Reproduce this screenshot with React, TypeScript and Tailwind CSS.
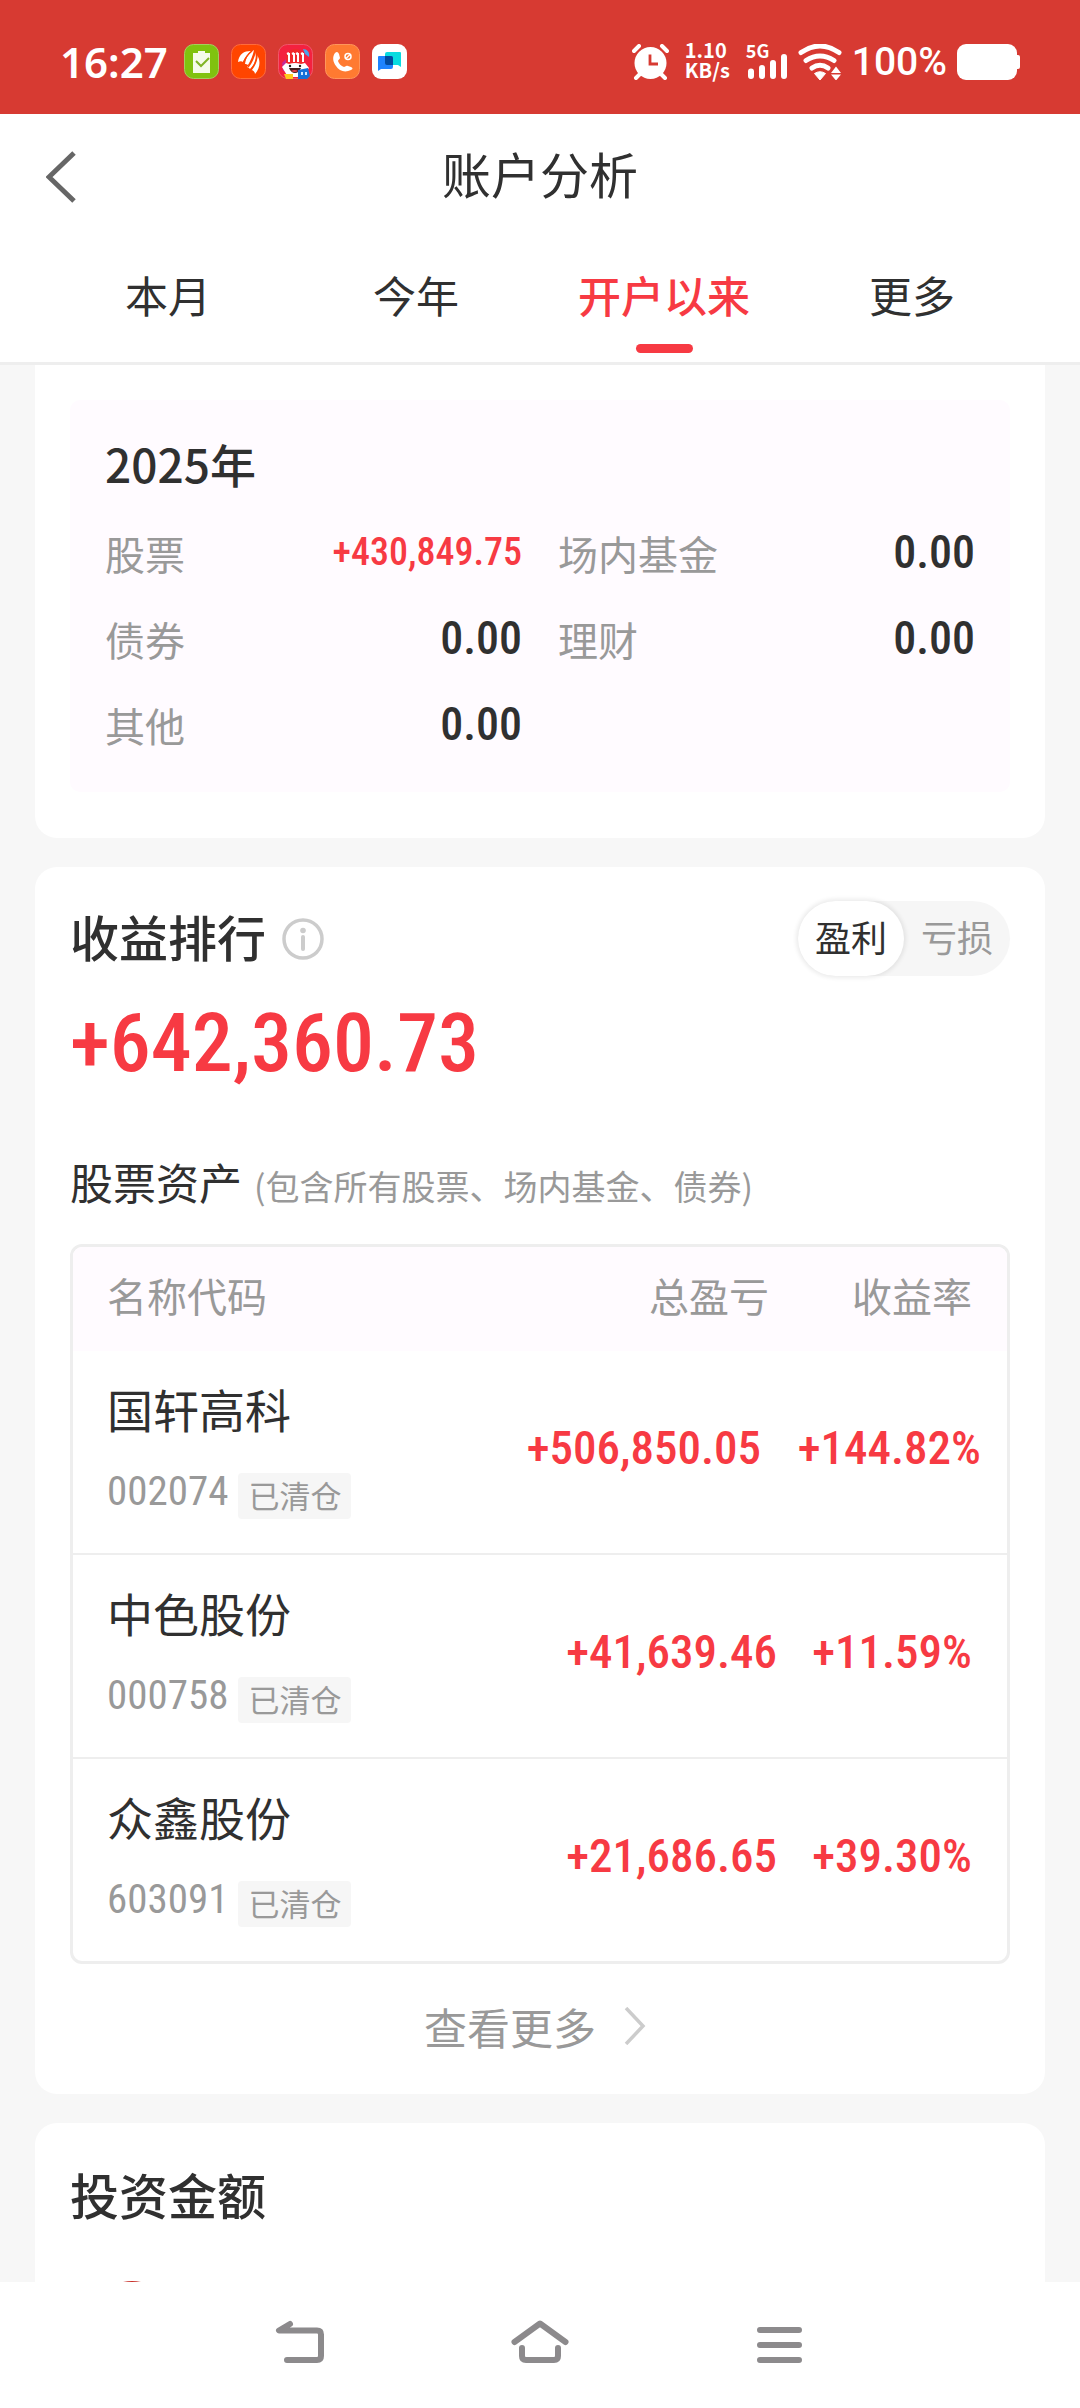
import { useState } from "react";

const tabs = ["本月", "今年", "开户以来", "更多"];

const yearItems = [
  { label: "股票", value: "+430,849.75", gain: true },
  { label: "场内基金", value: "0.00" },
  { label: "债券", value: "0.00" },
  { label: "理财", value: "0.00" },
  { label: "其他", value: "0.00" },
];

const stocks = [
  { name: "国轩高科", code: "002074", profit: "+506,850.05", rate: "+144.82%", wide: true },
  { name: "中色股份", code: "000758", profit: "+41,639.46", rate: "+11.59%" },
  { name: "众鑫股份", code: "603091", profit: "+21,686.65", rate: "+39.30%" },
];

function AppIcons() {
  return (
    <div className="flex gap-3">
      <svg className="size-[35px]" viewBox="0 0 35 35" aria-hidden="true">
        <rect x=".5" y=".5" width="34" height="34" rx="9" fill="#80c20f" stroke="#a3cf5c" />
        <path d="M9 9h5V7h7v2h5v20H9z" fill="#f5fbea" />
        <path d="M12 17l5 5 8-8" fill="none" stroke="#80b525" strokeWidth="2" />
      </svg>
      <svg className="size-[35px]" viewBox="0 0 35 35" aria-hidden="true">
        <rect x=".5" y=".5" width="34" height="34" rx="9" fill="#ff4500" stroke="#ff6b3a" />
        <path d="M7 18C8 10 13 7 20 7c-3 3-6 6-8 11-1-1-3-1-5 0z" fill="#fff" />
        <path d="M14 20C15 13 18 9 23 6c-1 5-3 10-6 15-1-1-2-1-3-1z" fill="#fff" />
        <path d="M19 25c-1-1-2-2-3-2 4-4 7-9 8-15 2 6 0 12-5 17z" fill="#fff" />
        <path d="M24 30c0-2-2-4-4-4 4-5 6-9 6-15 4 6 3 13-2 19z" fill="#fff" />
        <path d="M12 20C14 14 17 10 21 7M17 23c4-5 6-10 7-15M20 26c4-5 6-10 6-15" fill="none" stroke="#ff4500" strokeWidth="1.500" />
      </svg>
      <svg className="size-[35px]" viewBox="0 0 35 35" aria-hidden="true">
        <rect x=".5" y=".5" width="34" height="34" rx="9" fill="#f4213f" stroke="#f0566a" />
        <path d="M25 5c4 0 7 3 6 8l-4-3z" fill="#4aa3ea" />
        <path d="M4 19l4-4v12H5z" fill="#c42b96" />
        <path d="M8 20V10q10-10 18 0v10z" fill="#f12a2c" />
        <path d="M11 9v9M16 9v9M20 9v9M25 9v9M9 10l2-1M14 10l2-1M18 10l2-1M23 10l2-1" stroke="#fff" strokeWidth="2" />
        <path d="M4 23l4-4 3 1q6-2 12 0l4-1 4 5-7 9H10z" fill="#fff" />
        <circle cx="12" cy="22" r="1.200" fill="#222" />
        <circle cx="22" cy="22" r="1.200" fill="#222" />
        <path d="M11 24h12q-2 5-6 5t-6-5z" fill="#44201e" />
        <path d="M13 27q4-2 7 0-3 2-7 0z" fill="#ef3f4c" />
        <path d="M6 30h9v5H8z" fill="#ffc91f" />
        <path d="M20 26l10-2 2 8-3 3h-9z" fill="#1670d8" />
        <path d="M23 28h2v3h-2zM27 28h2v3h-2z" fill="#cfe6ff" />
      </svg>
      <svg className="size-[35px]" viewBox="0 0 35 35" aria-hidden="true">
        <rect x=".5" y=".5" width="34" height="34" rx="9" fill="#ff7a31" stroke="#ff965b" />
        <path d="M10 9c2-2 3-1 4 1l1 4c0 1-2 2-2 3 1 3 3 5 6 6 1 0 2-2 4-1l3 1c2 1 2 2 0 3-6 3-12 1-15-4-3-4-4-9-1-13z" fill="#fff" />
        <circle cx="23" cy="12.500" r="3" fill="none" stroke="#fff" strokeWidth="1.500" />
        <path d="M21 14.500l4-4" stroke="#fff" strokeWidth="1.200" />
      </svg>
      <svg className="size-[35px]" viewBox="0 0 35 35" aria-hidden="true">
        <rect width="35" height="35" rx="9" fill="#fff" />
        <path d="M15 8h13q1 0 1 1v14l-3-2H15q-2 0-2-2v-9q0-2 2-2z" fill="#08dbe0" />
        <path d="M7 12h12q2 0 2 2v9q0 2-2 2H9l-3 2V13q0-1 1-1z" fill="#1e83ff" />
        <path d="M13 12h6q2 0 2 2v7h-6q-2 0-2-2z" fill="#024a9e" />
      </svg>
    </div>
  );
}

function StatusBar() {
  return (
    <div className="flex h-[114px] items-center justify-between bg-[#d73a32] px-[60px] pt-[9px] text-white">
      <div className="flex items-center gap-4">
        <span className="font-['Noto_Sans',sans-serif] text-[42px] leading-10 font-semibold">16:27</span>
        <AppIcons />
      </div>
      <div className="flex items-center">
        <svg className="h-9 w-[37px]" viewBox="0 0 37 36" aria-hidden="true">
          <circle cx="18.500" cy="19" r="16" fill="#fff" />
          <path d="M2 7l5-5M35 7l-5-5M4 34l5-5M33 34l-5-5" stroke="#fff" strokeWidth="4" strokeLinecap="round" />
          <path d="M18 10.500V20h8" fill="none" stroke="#d73a32" strokeWidth="2.800" />
        </svg>
        <div className="ml-4 pb-1 text-[20px] leading-5 font-bold">
          <p>1.10</p>
          <p>KB/s</p>
        </div>
        <div className="ml-4 flex h-10 flex-col justify-between pb-0.5">
          <span className="text-[18px] leading-4 font-bold">5G</span>
          <svg className="-mt-2 h-[26px] w-[42px]" viewBox="0 0 42 26" aria-hidden="true">
            <path d="M5 17.500v4.500M16 14v8M27 9v13M38 3v19" stroke="#fff" strokeWidth="6" strokeLinecap="round" />
          </svg>
        </div>
        <svg className="ml-2.5 h-9 w-11" viewBox="0 0 44 36" aria-hidden="true">
          <path d="M3 8.500Q22-4.500 41 8.500M8 16.500q14-9 28 0M14 24q8-5.500 16 0" fill="none" stroke="#fff" strokeWidth="5" strokeLinecap="round" />
          <path d="M16.500 29.500q5.500-3.500 11 0L22 36z" fill="#fff" stroke="#fff" strokeLinejoin="round" />
          <path d="M38 22.500l5 6.500H33zM38 36.500l-5-6h10z" fill="#fff" />
        </svg>
        <span className="ml-2.5 font-[Roboto] text-[39px] leading-10 font-medium">100%</span>
        <svg className="ml-2.5 h-9 w-[63px]" viewBox="0 0 63 36" aria-hidden="true">
          <rect width="60" height="36" rx="9" fill="#fff" />
          <rect x="56" y="11" width="7" height="14" rx="2" fill="#fff" />
        </svg>
      </div>
    </div>
  );
}

function Header() {
  const [active, setActive] = useState("开户以来");

  return (
    <header className="border-b-[3px] border-[#eee] bg-white">
      <div className="grid h-[118px] grid-cols-[1fr_auto_1fr] items-center px-[46px]">
        <button type="button" aria-label="返回" className="justify-self-start pt-2">
          <svg className="h-[52px] w-[30px]" viewBox="0 0 30 52" aria-hidden="true">
            <path d="M28 2L3 26l25 24" fill="none" stroke="#666" strokeWidth="5" />
          </svg>
        </button>
        <h1 className="text-[49px] leading-[60px]">账户分析</h1>
      </div>
      <nav className="grid grid-cols-4 px-11 pt-8">
        {tabs.map((tab) => (
          <button
            key={tab}
            type="button"
            onClick={() => setActive(tab)}
            className={`flex flex-col items-center pb-[9px] text-[43px] leading-[60px] ${
              tab === active ? "font-medium text-[#f73a43]" : ""
            }`}
          >
            {tab}
            <span className={`mt-5 h-[9px] w-[57px] rounded-full ${tab === active ? "bg-[#f73a43]" : ""}`} />
          </button>
        ))}
      </nav>
    </header>
  );
}

function YearCard() {
  return (
    <section className="rounded-b-[22px] bg-white px-[35px] pt-[35px] pb-[46px]">
      <div className="rounded-[10px] bg-[#fffbff] px-[35px] pt-[35px] pb-6">
        <h2 className="text-[46px] leading-[56px] font-medium">2025年</h2>
        <dl className="mt-[19px] grid grid-cols-2 gap-x-9">
          {yearItems.map((item) => (
            <div key={item.label} className="flex h-[86px] items-center justify-between">
              <dt className="text-[40px] text-[#999]">{item.label}</dt>
              <dd
                className={`pb-0.5 font-['Roboto_Condensed',Roboto,sans-serif] font-medium ${
                  item.gain ? "text-[38px] text-[#f73a43]" : "text-[46px]"
                }`}
              >
                {item.value}
              </dd>
            </div>
          ))}
        </dl>
      </div>
    </section>
  );
}

function RankingCard() {
  const [mode, setMode] = useState("盈利");

  return (
    <section className="rounded-[22px] bg-white px-[35px] pt-[34px] pb-[38px]">
      <div className="flex items-center justify-between">
        <div className="flex items-center gap-4">
          <h2 className="pb-1.5 text-[49px] leading-[60px] font-medium">收益排行</h2>
          <button type="button" aria-label="说明">
            <svg className="size-[42px]" viewBox="0 0 42 42" aria-hidden="true">
              <circle cx="21" cy="21" r="19" fill="none" stroke="#ccc" strokeWidth="3.500" />
              <circle cx="21" cy="12.500" r="2.800" fill="#ccc" />
              <path d="M21 19v12" stroke="#ccc" strokeWidth="4" strokeLinecap="round" />
            </svg>
          </button>
        </div>
        <div className="flex h-[75px] rounded-full bg-[#f6f6f6] text-[36px]">
          {["盈利", "亏损"].map((name) => (
            <button
              key={name}
              type="button"
              onClick={() => setMode(name)}
              className={`w-[106px] rounded-full pb-1.5 ${
                name === mode ? "bg-white shadow-[0_0_4px_2px_rgba(0,0,0,0.08)]" : "text-[#999]"
              }`}
            >
              {name}
            </button>
          ))}
        </div>
      </div>
      <p className="mt-[27px] font-['Roboto_Condensed',Roboto,sans-serif] text-[82px] leading-[80px] font-medium text-[#f73a43]">
        +642,360.73
      </p>

      <h3 className="mt-[68px] flex items-baseline gap-3 text-[43px] leading-[60px]">
        股票资产
        <span className="text-[34px] text-[#999]">(包含所有股票、场内基金、债券)</span>
      </h3>
      <div className="mt-7 overflow-hidden rounded-[12px] border-[3px] border-[#eee]">
        <table className="w-full">
          <thead>
            <tr className="h-[104px] bg-[#fffbff] text-[40px] text-[#999]">
              <th scope="col" className="pb-2 pl-[34px] text-left font-normal">名称代码</th>
              <th scope="col" className="pr-4 pb-2 text-right font-normal">总盈亏</th>
              <th scope="col" className="w-[222px] pr-[35px] pb-2 text-right font-normal">收益率</th>
            </tr>
          </thead>
          <tbody>
            {stocks.map((stock) => (
              <tr key={stock.code} className="border-b-2 border-[#eee] last:border-b-0">
                <td className="pt-[27px] pb-[34px] pl-[34px]">
                  <p className="text-[46px] leading-[60px]">{stock.name}</p>
                  <div className="mt-[35px] flex items-start gap-2.5">
                    <span className="font-['Roboto_Condensed',Roboto,sans-serif] text-[41px] leading-9 text-[#999]">
                      {stock.code}
                    </span>
                    <span className="rounded-[4px] bg-[#f6f6f6] px-2.5 pb-0.5 text-[31px] leading-[44px] text-[#999]">
                      已清仓
                    </span>
                  </div>
                </td>
                <td
                  className={`pb-2 text-right font-['Roboto_Condensed',Roboto,sans-serif] text-[47px] font-medium text-[#f73a43] ${
                    stock.wide ? "pr-6" : "pr-2"
                  }`}
                >
                  {stock.profit}
                </td>
                <td
                  className={`pb-2 text-right font-['Roboto_Condensed',Roboto,sans-serif] text-[47px] font-medium text-[#f73a43] ${
                    stock.wide ? "pr-[26px]" : "pr-[35px]"
                  }`}
                >
                  {stock.rate}
                </td>
              </tr>
            ))}
          </tbody>
        </table>
      </div>
      <a href="#more" className="mt-8 flex items-center justify-center gap-7 pr-2.5 text-[43px] leading-[60px] text-[#999]">
        查看更多
        <svg className="h-[38px] w-[22px]" viewBox="0 0 22 38" aria-hidden="true">
          <path d="M2 1l17 18L2 37" fill="none" stroke="#ccc" strokeWidth="3.500" />
        </svg>
      </a>
    </section>
  );
}

function InvestmentCard() {
  return (
    <section className="rounded-t-[22px] bg-white px-[35px] pt-[41px]">
      <h2 className="text-[49px] leading-[60px] font-medium">投资金额</h2>
      <svg className="mt-[57px] ml-[22px] size-20" viewBox="0 0 80 80" aria-hidden="true">
        <circle cx="40" cy="40" r="40" fill="#c9332d" />
      </svg>
    </section>
  );
}

function SystemNav() {
  return (
    <nav className="flex h-[126px] shrink-0 justify-center gap-[182px] bg-white pt-[38px]">
      <button type="button" aria-label="返回上一页" className="self-start">
        <svg className="h-[44px] w-[58px]" viewBox="0 0 58 44" aria-hidden="true">
          <path d="M19 4L8 10.500h38q4 0 4 4V36q0 4-4 4H16" fill="none" stroke="#8c8a8c" strokeWidth="6" strokeLinecap="round" strokeLinejoin="round" />
        </svg>
      </button>
      <button type="button" aria-label="主页" className="self-start">
        <svg className="h-[44px] w-[58px]" viewBox="0 0 58 44" aria-hidden="true">
          <path d="M3.500 22L29 3.500 54.500 22M11 28v8q0 4 4 4h28q4 0 4-4v-8" fill="none" stroke="#8c8a8c" strokeWidth="6" strokeLinecap="round" strokeLinejoin="round" />
        </svg>
      </button>
      <button type="button" aria-label="最近任务" className="self-start">
        <svg className="h-[44px] w-[58px]" viewBox="0 0 58 44" aria-hidden="true">
          <path d="M9 10h39M9 25h39M9 40h39" stroke="#8c8a8c" strokeWidth="6" strokeLinecap="round" />
        </svg>
      </button>
    </nav>
  );
}

export default function App() {
  return (
    <div className="flex h-screen flex-col bg-[#f7f7f7] font-['Noto_Sans_CJK_SC',sans-serif] text-[#303030]">
      <StatusBar />
      <Header />
      <main className="flex min-h-0 flex-1 flex-col gap-[29px] overflow-hidden px-[35px] *:shrink-0">
        <YearCard />
        <RankingCard />
        <InvestmentCard />
      </main>
      <SystemNav />
    </div>
  );
}
